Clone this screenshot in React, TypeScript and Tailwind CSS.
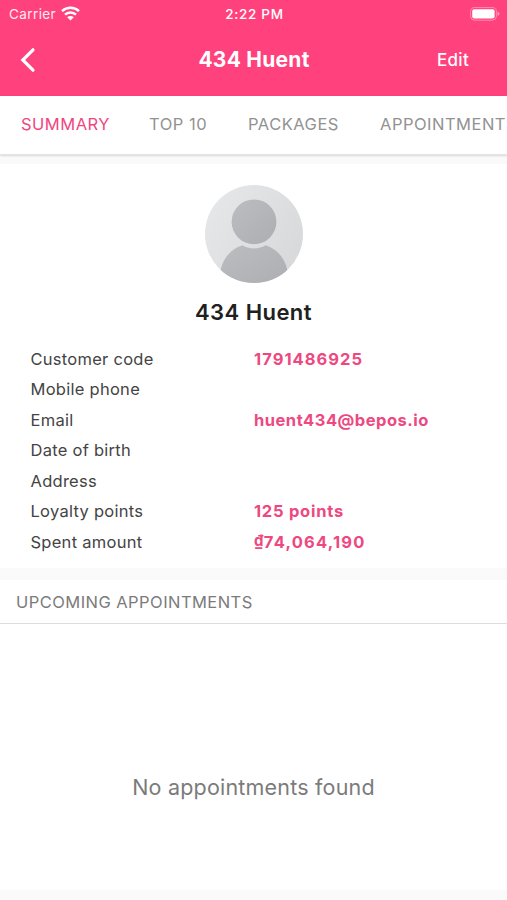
import React from "react";

const tabs = [
  { label: "SUMMARY", active: true, width: "w-[88px]" },
  { label: "TOP 10", active: false, width: "w-[59px]" },
  { label: "PACKAGES", active: false, width: "w-[92px]" },
  { label: "APPOINTMENTS", active: false, width: "w-[140px]" },
];

const details = [
  { label: "Customer code", value: "1791486925", spacing: "tracking-[1.05px]" },
  { label: "Mobile phone", value: "", spacing: "" },
  { label: "Email", value: "huent434@bepos.io", spacing: "tracking-[0.5px]" },
  { label: "Date of birth", value: "", spacing: "" },
  { label: "Address", value: "", spacing: "" },
  { label: "Loyalty points", value: "125 points", spacing: "tracking-[0.75px]" },
  { label: "Spent amount", currency: "₫", value: "74,064,190", spacing: "tracking-[1.2px]" },
];

function WifiIcon() {
  return (
    <svg width="19" height="15" viewBox="0 0 19 15" fill="none" stroke="white" strokeWidth="2.5">
      <path d="M1 5.1C5.8.7 13.2.7 18 5.1" />
      <path d="M4 8.6c3.2-2.9 7.8-2.9 11 0" />
      <path d="M9.5 14.4 6.2 11.2c1.9-1.6 4.7-1.6 6.6 0Z" fill="white" stroke="none" />
    </svg>
  );
}

function BatteryIcon() {
  return (
    <svg width="30" height="14" viewBox="0 0 30 14" fill="none">
      <rect x="0.6" y="0.6" width="25.8" height="12.6" rx="4" stroke="white" strokeOpacity="0.4" />
      <rect x="2.2" y="2.2" width="22.4" height="9.4" rx="2" fill="white" />
      <path d="M27.6 4.8c2.4.7 2.4 3.5 0 4.2Z" fill="white" fillOpacity="0.5" />
    </svg>
  );
}

function Avatar() {
  return (
    <svg width="98" height="98" viewBox="0 0 98 98">
      <defs>
        <linearGradient id="backdrop" x1="0" y1="0.2" x2="1" y2="0.8">
          <stop offset="0" stopColor="#e5e7e9" />
          <stop offset="1" stopColor="#d6d8da" />
        </linearGradient>
        <linearGradient id="figure" x1="0" y1="0" x2="1" y2="1">
          <stop offset="0" stopColor="#bbbdc0" />
          <stop offset="1" stopColor="#acaeb1" />
        </linearGradient>
        <clipPath id="round">
          <circle cx="49" cy="49" r="49" />
        </clipPath>
      </defs>
      <g clipPath="url(#round)">
        <rect width="98" height="98" fill="url(#backdrop)" />
        <circle cx="49" cy="36.8" r="22.4" fill="url(#figure)" />
        <path
          d="M15 100C13 80 22 65 37.5 60.3C44 64.5 54 64.5 60.5 60.3C76 65 85 80 83 100Z"
          fill="url(#figure)"
        />
      </g>
    </svg>
  );
}

export default function App() {
  return (
    <div className="flex h-[900px] w-[507px] flex-col overflow-hidden bg-[#fafafa] font-['Inter','Noto_Sans',sans-serif]">
      <header className="h-24 shrink-0 bg-[#ff417d] text-white">
        <div className="grid h-[27px] grid-cols-3 items-center pr-[7px] pl-[9px] text-[13px]">
          <div className="flex items-center gap-[5px]">
            <span className="pt-px text-[13.5px] tracking-[0.4px] text-white/90">Carrier</span>
            <WifiIcon />
          </div>
          <span className="pt-px text-center text-[13.5px] font-medium tracking-[0.7px]">2:22 PM</span>
          <div className="flex justify-end">
            <BatteryIcon />
          </div>
        </div>
        <div className="grid h-[66px] grid-cols-3 items-center pr-[38px] pl-5">
          <button aria-label="Back" className="w-4">
            <svg width="16" height="26" viewBox="0 0 16 26" fill="none" stroke="white" strokeWidth="3.2" strokeLinecap="round">
              <path d="M13 2.8 2.8 13 13 23.2" />
            </svg>
          </button>
          <h1 className="pl-[19px] text-center text-[21px] font-bold tracking-[0.25px] whitespace-nowrap">434 Huent</h1>
          <button className="pt-px text-right text-[17px] font-medium tracking-[0.3px]">Edit</button>
        </div>
      </header>

      <nav className="z-10 flex h-[59px] shrink-0 items-center gap-10 overflow-hidden border-b border-[#e4e4e4] bg-white pb-0.5 pl-[21px] text-[16.5px] tracking-[0.5px] shadow-[0_1px_2px_rgba(0,0,0,0.14)]">
        {tabs.map((tab) => (
          <span
            key={tab.label}
            className={`${tab.width} shrink-0 whitespace-nowrap ${tab.active ? "text-[#f04680]" : "text-[#929292]"}`}
          >
            {tab.label}
          </span>
        ))}
      </nav>

      <section className="mt-[9px] flex h-[404px] shrink-0 flex-col items-center bg-white pt-[21px]">
        <Avatar />
        <h2 className="mt-[13px] text-[22px] leading-8 font-semibold tracking-[0.45px] text-[#202020]">434 Huent</h2>
        <dl className="mt-4 w-full pl-[30.5px] text-[16.5px] tracking-[0.27px]">
          {details.map((item) => (
            <div key={item.label} className="flex h-[30.5px] items-center">
              <dt className="w-[223.5px] text-[#444444]">{item.label}</dt>
              <dd className={`font-bold text-[#ee4880] ${item.spacing}`}>
                {item.currency && <span className="align-[2px] text-[15px] leading-none tracking-[0.4px]">{item.currency}</span>}
                {item.value}
              </dd>
            </div>
          ))}
        </dl>
      </section>

      <section className="mt-3 flex h-[310px] shrink-0 flex-col bg-white">
        <h3 className="flex h-11 items-center border-b border-[#dddddd] pt-px pl-4 text-[16.5px] tracking-[0.45px] text-[#7b7b7b]">
          UPCOMING APPOINTMENTS
        </h3>
        <div className="flex flex-1 items-center justify-center pt-[60px] text-[21.5px] tracking-[0.2px] text-[#7b7b7b]">
          No appointments found
        </div>
      </section>
    </div>
  );
}
